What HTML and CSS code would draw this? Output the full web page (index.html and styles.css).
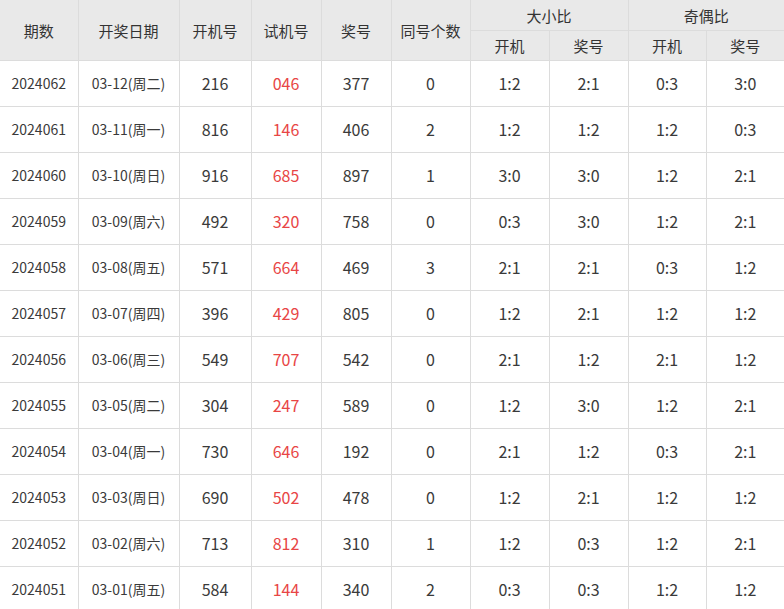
FILE: index.html
```html
<!DOCTYPE html>
<html lang="zh">
<head>
<meta charset="utf-8">
<link rel="stylesheet" href="styles.css">
</head>
<body>
<table class="kj">
<colgroup>
<col class="c1"><col class="c2"><col class="c3"><col class="c4"><col class="c5"><col class="c6"><col class="c7"><col class="c8"><col class="c9"><col class="c10">
</colgroup>
<thead>
<tr class="h1">
<th rowspan="2" class="first">期数</th>
<th rowspan="2">开奖日期</th>
<th rowspan="2">开机号</th>
<th rowspan="2">试机号</th>
<th rowspan="2">奖号</th>
<th rowspan="2">同号个数</th>
<th colspan="2">大小比</th>
<th colspan="2">奇偶比</th>
</tr>
<tr class="h2">
<th>开机</th><th>奖号</th><th>开机</th><th>奖号</th>
</tr>
</thead>
<tbody>
<tr><td class="first qs">2024062</td><td class="dt">03-12(周二)</td><td>216</td><td class="red">046</td><td>377</td><td>0</td><td>1:2</td><td>2:1</td><td>0:3</td><td>3:0</td></tr>
<tr><td class="first qs">2024061</td><td class="dt">03-11(周一)</td><td>816</td><td class="red">146</td><td>406</td><td>2</td><td>1:2</td><td>1:2</td><td>1:2</td><td>0:3</td></tr>
<tr><td class="first qs">2024060</td><td class="dt">03-10(周日)</td><td>916</td><td class="red">685</td><td>897</td><td>1</td><td>3:0</td><td>3:0</td><td>1:2</td><td>2:1</td></tr>
<tr><td class="first qs">2024059</td><td class="dt">03-09(周六)</td><td>492</td><td class="red">320</td><td>758</td><td>0</td><td>0:3</td><td>3:0</td><td>1:2</td><td>2:1</td></tr>
<tr><td class="first qs">2024058</td><td class="dt">03-08(周五)</td><td>571</td><td class="red">664</td><td>469</td><td>3</td><td>2:1</td><td>2:1</td><td>0:3</td><td>1:2</td></tr>
<tr><td class="first qs">2024057</td><td class="dt">03-07(周四)</td><td>396</td><td class="red">429</td><td>805</td><td>0</td><td>1:2</td><td>2:1</td><td>1:2</td><td>1:2</td></tr>
<tr><td class="first qs">2024056</td><td class="dt">03-06(周三)</td><td>549</td><td class="red">707</td><td>542</td><td>0</td><td>2:1</td><td>1:2</td><td>2:1</td><td>1:2</td></tr>
<tr><td class="first qs">2024055</td><td class="dt">03-05(周二)</td><td>304</td><td class="red">247</td><td>589</td><td>0</td><td>1:2</td><td>3:0</td><td>1:2</td><td>2:1</td></tr>
<tr><td class="first qs">2024054</td><td class="dt">03-04(周一)</td><td>730</td><td class="red">646</td><td>192</td><td>0</td><td>2:1</td><td>1:2</td><td>0:3</td><td>2:1</td></tr>
<tr><td class="first qs">2024053</td><td class="dt">03-03(周日)</td><td>690</td><td class="red">502</td><td>478</td><td>0</td><td>1:2</td><td>2:1</td><td>1:2</td><td>1:2</td></tr>
<tr><td class="first qs">2024052</td><td class="dt">03-02(周六)</td><td>713</td><td class="red">812</td><td>310</td><td>1</td><td>1:2</td><td>0:3</td><td>1:2</td><td>2:1</td></tr>
<tr><td class="first qs">2024051</td><td class="dt">03-01(周五)</td><td>584</td><td class="red">144</td><td>340</td><td>2</td><td>0:3</td><td>0:3</td><td>1:2</td><td>1:2</td></tr>
</tbody>
</table>
</body>
</html>
```

FILE: styles.css
```css
html, body {
  margin: 0;
  padding: 0;
  background: #fff;
}
body {
  font-family: "Noto Sans CJK SC", "Noto Sans", sans-serif;
  color: #333;
}
.kj {
  border-collapse: collapse;
  table-layout: fixed;
  width: 784px;
}
.c1 { width: 78px; }
.c2 { width: 101px; }
.c3 { width: 72px; }
.c4 { width: 70px; }
.c5 { width: 70px; }
.c6 { width: 79px; }
.c7 { width: 79px; }
.c8 { width: 79px; }
.c9 { width: 78px; }
.c10 { width: 78px; }
.kj th, .kj td {
  border: 1px solid #dcdcdc;
  padding: 0;
  text-align: center;
  vertical-align: middle;
  white-space: nowrap;
  overflow: hidden;
}
.kj th {
  background: #e9e9e9;
  font-weight: normal;
  font-size: 15px;
  color: #333;
}
.kj thead tr:first-child th { border-top: none; }
.kj .first { border-left: none; }
.kj tr > :last-child { border-right: none; }
.h1 th { height: 30px; }
.h2 th { height: 29px; }
.kj td {
  height: 43px;
  padding-bottom: 2px;
  font-size: 16px;
  color: #3a3a3a;
}
.kj td.qs { font-size: 14px; }
.kj td.dt { font-size: 14px; }
.kj td.red { color: #e84545; }
```
